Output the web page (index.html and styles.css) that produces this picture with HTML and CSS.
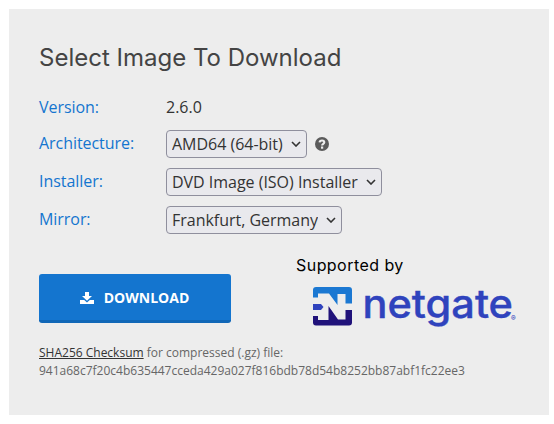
FILE: index.html
```
<!DOCTYPE html>
<html lang="en">
<head>
<meta charset="utf-8">
<title>Select Image To Download</title>
<link rel="stylesheet" href="styles.css">
</head>
<body>
<main class="panel">
  <h1 class="title">Select Image To Download</h1>
  <form class="fields">
    <div class="row row-version"><span class="label">Version:</span><span class="value">2.6.0</span></div>
    <div class="row">
      <label class="label" for="arch">Architecture:</label>
      <span class="picker"><select id="arch"><option>AMD64 (64-bit)</option></select><svg class="chevron" viewBox="0 0 10 6"><path d="M1 1l4 4 4-4"/></svg></span>
      <svg class="help" viewBox="0 0 14 14"><circle cx="7" cy="7" r="7"/><path class="help-hook" d="M4.6 5.3C4.8 2.8 9.3 2.8 9.3 5.3C9.3 6.9 7.1 6.8 7.1 8.6"/><rect class="help-dot" x="6" y="9.5" width="2.2" height="2.2"/></svg>
    </div>
    <div class="row">
      <label class="label" for="installer">Installer:</label>
      <span class="picker"><select id="installer"><option>DVD Image (ISO) Installer</option></select><svg class="chevron" viewBox="0 0 10 6"><path d="M1 1l4 4 4-4"/></svg></span>
    </div>
    <div class="row">
      <label class="label" for="mirror">Mirror:</label>
      <span class="picker"><select id="mirror"><option>Frankfurt, Germany</option></select><svg class="chevron" viewBox="0 0 10 6"><path d="M1 1l4 4 4-4"/></svg></span>
    </div>
  </form>
  <div class="actions">
    <button class="download" type="button">
      <svg class="download-icon" viewBox="0 0 14 12"><path d="M5 0h4v4h3L7 8.8 2 4h3z"/><path d="M0 8h4.2L7 10.4 9.8 8H14v4H0z"/></svg>
      <span>DOWNLOAD</span>
    </button>
    <div class="sponsor">
      <div class="sponsor-label">Supported by</div>
      <svg class="logo" viewBox="0 0 206 46">
        <path fill="#1b78d2" d="M0 10.500V3Q0 0 3 0H36Q39 0 39 3V16.500H32.500V7H24.500V18L16 6.500H5V10.500Z"/>
        <path fill="#2f43bd" d="M0 17H8L10.5 20L8 23H0Z"/>
        <path fill="#20127a" d="M0 29H5V33H15.500V19L25 32.500H32.500V23H39V35.500Q39 38.500 36 38.500H3Q0 38.500 0 35.500Z"/>
        <text class="wordmark" x="49.500" y="31" textLength="150.500" lengthAdjust="spacingAndGlyphs">netgate</text>
        <text class="registered" x="198" y="33.500">®</text>
      </svg>
    </div>
  </div>
  <p class="checksum"><a href="#">SHA256 Checksum</a> for compressed (.gz) file:<br>941a68c7f20c4b635447cceda429a027f816bdb78d54b8252bb87abf1fc22ee3</p>
</main>
</body>
</html>
```
FILE: styles.css
```
* { box-sizing: border-box; }
body {
  margin: 0;
  padding: 9px 5px 9px 9px;
  background: #fff;
  font-family: "Open Sans", "Noto Sans", sans-serif;
  color: #333;
}
.panel {
  height: 406px;
  padding: 32px 30px 0;
  background: #ededed;
}
.title {
  margin: 0;
  height: 34px;
  font: 400 24px/34px Inter, sans-serif;
  letter-spacing: 0;
  white-space: nowrap;
  color: #444;
}
.fields { margin-top: 13px; }
.row {
  display: flex;
  align-items: center;
  height: 38px;
  font-size: 16px;
}
.row-version { height: 37px; }
.label {
  width: 127px;
  color: #1475cf;
  letter-spacing: -0.05px;
  padding-bottom: 2px;
}
.row-version .label { padding-bottom: 0; }
.picker { position: relative; display: flex; }
select {
  appearance: none;
  height: 28px;
  margin: 0;
  padding: 0 22.5px 0 5px;
  border: 1px solid #8f8f9d;
  border-radius: 4px;
  background: #e9e9ed;
  font: inherit;
  letter-spacing: -0.02px;
  color: #333;
}
.chevron {
  position: absolute;
  right: 6px;
  top: 11px;
  width: 10px;
  height: 6px;
  fill: none;
  stroke: #333;
  stroke-width: 1.6;
}
.help { width: 14px; height: 14px; margin-left: 8.5px; fill: #5b5b5b; }
.help-hook { fill: none; stroke: #ededed; stroke-width: 2.1; }
.help-dot { fill: #ededed; }
.actions {
  display: flex;
  align-items: flex-start;
  height: 105px;
}
.download {
  display: flex;
  align-items: center;
  justify-content: center;
  gap: 10px;
  width: 192px;
  height: 49px;
  margin: 35px 0 0;
  padding: 1px 1px 0 0;
  border: 0;
  border-bottom: 3px solid #1067b7;
  border-radius: 3px;
  background: #1475cf;
  color: #fff;
  font: 700 14px/20px "Open Sans", sans-serif;
}
.download-icon { width: 14px; height: 12px; fill: #fff; }
.sponsor { margin: 14px 0 0 65px; }
.sponsor-label {
  height: 24px;
  font: 400 16px/24px Inter, sans-serif;
  letter-spacing: 0.45px;
  color: #000;
  white-space: nowrap;
}
.logo {
  display: block;
  width: 206px;
  height: 46px;
  margin: 10px 0 0 17px;
  overflow: visible;
}
.wordmark { font: 500 39px Inter, sans-serif; fill: #2f43bd; stroke: #2f43bd; stroke-width: 0.4; }
.registered { font: 600 7px Inter, sans-serif; fill: #2f43bd; }
.checksum {
  margin: 0;
  font-size: 12px;
  line-height: 18px;
  color: #666;
  white-space: nowrap;
}
.checksum a { color: #333; }
```
